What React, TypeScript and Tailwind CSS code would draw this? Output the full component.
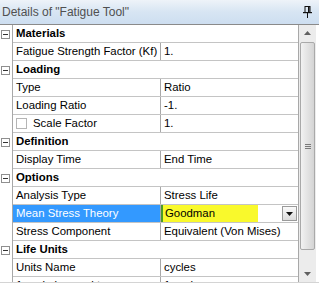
import React from 'react';

type Row =
  | { kind: 'cat'; label: string }
  | { kind: 'prop'; name: string; value: string; checkbox?: boolean; selected?: boolean };

const rows: Row[] = [
  { kind: 'cat', label: 'Materials' },
  { kind: 'prop', name: 'Fatigue Strength Factor (Kf)', value: '1.' },
  { kind: 'cat', label: 'Loading' },
  { kind: 'prop', name: 'Type', value: 'Ratio' },
  { kind: 'prop', name: 'Loading Ratio', value: '-1.' },
  { kind: 'prop', name: 'Scale Factor', value: '1.', checkbox: true },
  { kind: 'cat', label: 'Definition' },
  { kind: 'prop', name: 'Display Time', value: 'End Time' },
  { kind: 'cat', label: 'Options' },
  { kind: 'prop', name: 'Analysis Type', value: 'Stress Life' },
  { kind: 'prop', name: 'Mean Stress Theory', value: 'Goodman', selected: true },
  { kind: 'prop', name: 'Stress Component', value: 'Equivalent (Von Mises)' },
  { kind: 'cat', label: 'Life Units' },
  { kind: 'prop', name: 'Units Name', value: 'cycles' },
  { kind: 'prop', name: '1 cycle is equal to', value: '1 cycles' },
];

const Expander = () => (
  <div className="w-[9px] h-[9px] border border-[#8f8f8f] bg-white flex items-center justify-center">
    <div className="w-[5px] h-px bg-[#333]" />
  </div>
);

const PinIcon = () => (
  <svg width="9" height="12" viewBox="0 0 9 12">
    <rect x="2" y="0.5" width="5" height="6" fill="none" stroke="#111" strokeWidth="1" />
    <rect x="5" y="1" width="1.5" height="5" fill="#111" />
    <rect x="0" y="6" width="9" height="1.2" fill="#111" />
    <rect x="4" y="7" width="1" height="5" fill="#111" />
  </svg>
);

const Scrollbar = () => (
  <div className="w-[17px] h-full bg-[#ececec] flex flex-col items-center">
    <div className="h-[16px] w-full flex items-center justify-center">
      <svg width="7" height="4" viewBox="0 0 7 4">
        <path d="M0 4 L3.5 0 L7 4 Z" fill="#606060" />
      </svg>
    </div>
    <div className="mt-[1px] w-[15px] h-[208px] rounded-[2px] border border-[#a9a9a9] bg-gradient-to-r from-[#f2f2f2] to-[#d4d4d4] flex items-center justify-center">
      <div className="flex flex-col gap-[1px]">
        <div className="w-[6px] h-px bg-[#7a7a7a]" />
        <div className="w-[6px] h-px bg-[#7a7a7a]" />
        <div className="w-[6px] h-px bg-[#7a7a7a]" />
      </div>
    </div>
    <div className="flex-1 w-full flex items-end justify-center pb-[6px]">
      <svg width="7" height="4" viewBox="0 0 7 4">
        <path d="M0 0 L7 0 L3.5 4 Z" fill="#606060" />
      </svg>
    </div>
  </div>
);

export default function App() {
  return (
    <div className="w-[319px] h-[288px] bg-white overflow-hidden font-['Liberation_Sans',Arial,sans-serif] text-[11.4px] text-black">
      <div className="h-[25px] border-b border-[#8a8a8a] bg-gradient-to-b from-[#eef3f9] via-[#d7e5f3] to-[#cddef0] flex items-center justify-between pl-[2px] pr-[7px]">
        <span className="text-[12px] text-[#505050]">Details of "Fatigue Tool"</span>
        <PinIcon />
      </div>
      <div className="flex h-[258px] border-b border-[#d4d4d4]">
        <div className="w-[12px] flex flex-col overflow-hidden">
          {rows.map((r, i) => (
            <div key={i} className="h-[18px] shrink-0 flex items-center justify-start pl-[1px]">
              {r.kind === 'cat' && <Expander />}
            </div>
          ))}
        </div>
        <div className="w-[287px] border-l border-r border-[#a8a8a8] flex flex-col overflow-hidden">
          {rows.map((r, i) =>
            r.kind === 'cat' ? (
              <div key={i} className="h-[18px] shrink-0 border-b border-[#c4c4c4] flex items-center pl-[3px] font-bold">
                {r.label}
              </div>
            ) : (
              <div key={i} className="h-[18px] shrink-0 border-b border-[#c4c4c4] flex">
                <div
                  className={`w-[147px] flex items-center pl-[3px] whitespace-nowrap ${
                    r.selected ? 'bg-[#3399ff] text-white' : ''
                  }`}
                >
                  {r.checkbox && (
                    <div className="w-[11px] h-[11px] border border-[#b5b5b5] bg-white mr-[6px]" />
                  )}
                  {r.name}
                </div>
                <div className="flex-1 border-l border-[#a8a8a8] flex items-center">
                  {r.selected ? (
                    <div className="flex-1 h-full flex items-center">
                      <div className="w-[2px] h-full bg-[#4a9a2a]" />
                      <div className="w-[95px] h-full bg-[#f9f92c] flex items-center pl-[2px]">{r.value}</div>
                      <div className="flex-1" />
                      <div className="w-[15px] h-[15px] mr-[1px] border border-[#9a9a9a] bg-gradient-to-b from-[#fafafa] to-[#dcdcdc] flex items-center justify-center">
                        <svg width="7" height="4" viewBox="0 0 7 4">
                          <path d="M0 0 L7 0 L3.5 4 Z" fill="#111" />
                        </svg>
                      </div>
                    </div>
                  ) : (
                    <span className="pl-[3px] whitespace-nowrap">{r.value}</span>
                  )}
                </div>
              </div>
            )
          )}
        </div>
        <Scrollbar />
      </div>
    </div>
  );
}
